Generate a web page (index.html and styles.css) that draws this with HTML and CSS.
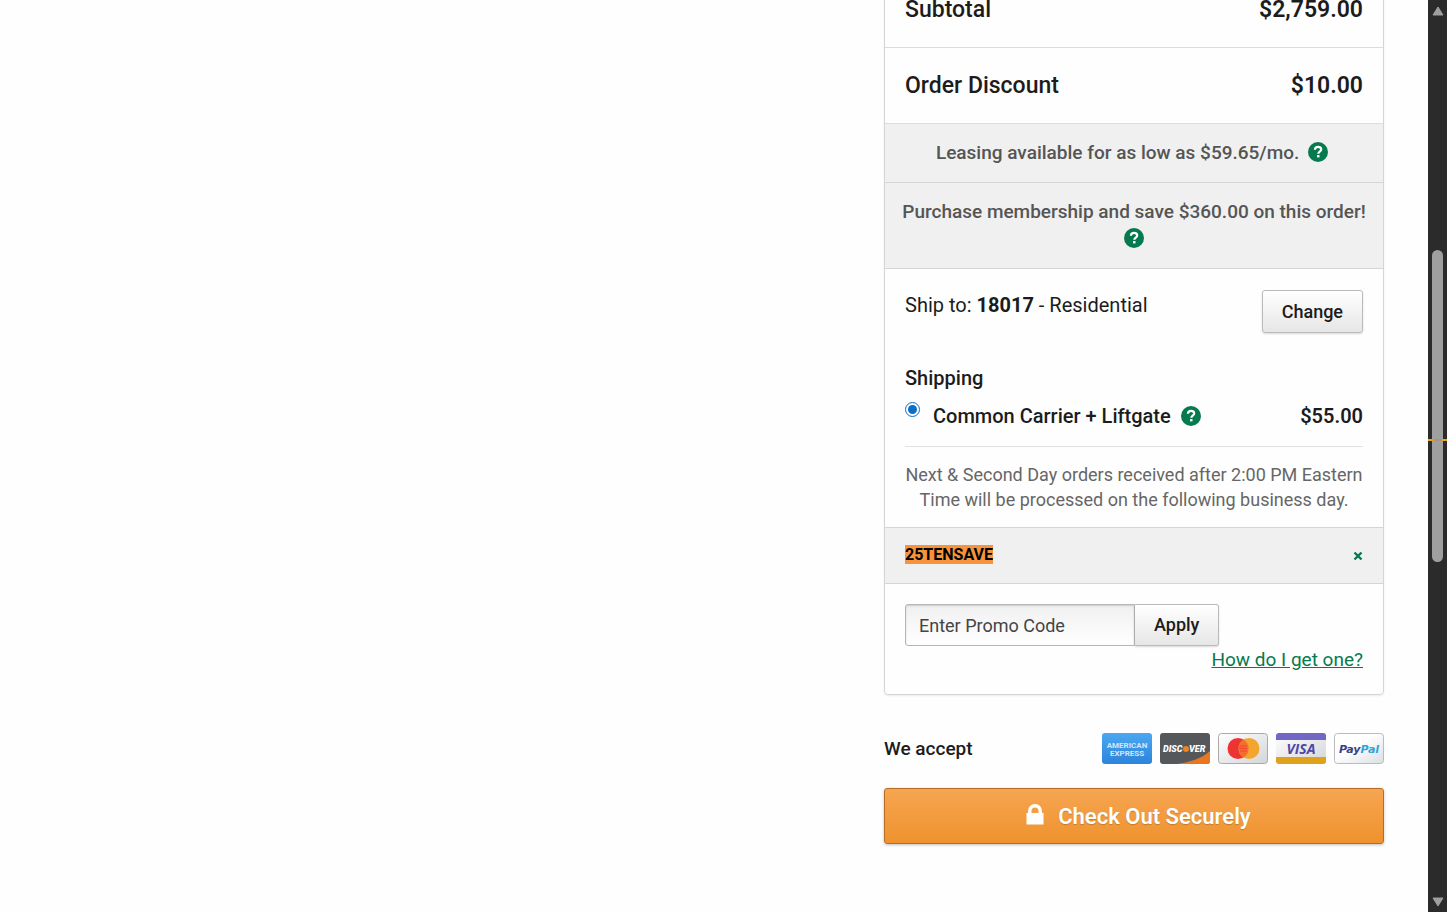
FILE: index.html
```html
<!DOCTYPE html>
<html lang="en">
<head>
  <meta charset="UTF-8" />
  <meta name="viewport" content="width=device-width, initial-scale=1.0"/>
  <title>Cart</title>
  <link rel="stylesheet" href="styles.css">
</head>
<body>

<svg class="sprite" aria-hidden="true">
  <symbol id="help" viewBox="0 0 20 20">
    <circle cx="10" cy="10" r="10" fill="#067a4f"/>
    <path d="M6.9 7.7C7 5.7 8.3 4.8 10.1 4.8c1.8 0 3.1 1 3.1 2.6 0 2.2-2.9 2.2-2.9 4.4" fill="none" stroke="#fff" stroke-width="2.2"/>
    <rect x="9" y="13" width="2.5" height="2.4" fill="#fff"/>
  </symbol>
</svg>

<div class="page">
  <main class="cart">
    <aside class="sidebar">
      <div class="summary">
        <div class="total-row">
          <span>Subtotal</span>
          <span class="amount">$2,759.00</span>
        </div>
        <div class="total-row">
          <span>Order Discount</span>
          <span class="amount">$10.00</span>
        </div>

        <div class="notice">
          Leasing available for as low as $59.65/mo.
          <button class="help" aria-label="Leasing details"><svg><use href="#help"/></svg></button>
        </div>
        <div class="notice">
          Purchase membership and save $360.00 on this order!
          <button class="help" aria-label="Membership details"><svg><use href="#help"/></svg></button>
        </div>

        <div class="shipping">
          <div class="ship-to">
            <p>Ship to: <strong>18017</strong> - Residential</p>
            <button class="btn">Change</button>
          </div>
          <h2>Shipping</h2>
          <div class="method">
            <input type="radio" id="carrier" name="method" checked>
            <label for="carrier">Common Carrier + Liftgate</label>
            <button class="help" aria-label="Carrier details"><svg><use href="#help"/></svg></button>
            <span class="amount">$55.00</span>
          </div>
          <p class="cutoff">Next &amp; Second Day orders received after 2:00 PM Eastern Time will be processed on the following business day.</p>
        </div>

        <div class="coupon">
          <mark>25TENSAVE</mark>
          <button class="remove" aria-label="Remove coupon">
            <svg viewBox="0 0 10 10"><path d="M1.5 1.5l7 7M8.5 1.5l-7 7" stroke="#067a4f" stroke-width="2.4"/></svg>
          </button>
        </div>

        <form class="promo">
          <div class="promo-field">
            <input type="text" placeholder="Enter Promo Code" aria-label="Enter Promo Code">
            <button type="button" class="btn">Apply</button>
          </div>
          <a href="#">How do I get one?</a>
        </form>
      </div>

      <div class="accept">
        <span>We accept</span>
        <div class="cards">
          <svg viewBox="0 0 50 31" role="img" aria-label="American Express">
            <defs>
              <linearGradient id="amex" x2="0" y2="1"><stop stop-color="#4ba7f0"/><stop offset="1" stop-color="#2c84dc"/></linearGradient>
              <linearGradient id="silver" x2="1" y2="1"><stop stop-color="#fff"/><stop offset="1" stop-color="#d3d5d8"/></linearGradient>
              <linearGradient id="pale" x2="1" y2="1"><stop offset=".4" stop-color="#fff"/><stop offset="1" stop-color="#dcdee2"/></linearGradient>
            </defs>
            <rect width="50" height="31" rx="3" fill="url(#amex)"/>
            <text class="amex" x="25" y="15" text-anchor="middle">AMERICAN</text>
            <text class="amex" x="25" y="23" text-anchor="middle">EXPRESS</text>
          </svg>
          <svg viewBox="0 0 50 31" role="img" aria-label="Discover">
            <rect width="50" height="31" rx="3" fill="#55585b"/>
            <path d="M50 18v10a3 3 0 0 1-3 3H17c13-2 24-5 33-13z" fill="#e8771f"/>
            <text class="discover" x="3" y="19">DISC</text>
            <circle cx="26" cy="16" r="3" fill="#f08322"/>
            <text class="discover" x="29" y="19">VER</text>
          </svg>
          <svg viewBox="0 0 50 31" role="img" aria-label="Mastercard">
            <rect x=".5" y=".5" width="49" height="30" rx="3" fill="url(#silver)" stroke="#aaa"/>
            <circle cx="20" cy="15.500" r="10.500" fill="#ee3433"/>
            <circle cx="31" cy="15.500" r="10.500" fill="#f4a52f"/>
            <path d="M25.500 6.500a10.500 10.500 0 0 1 0 18 10.500 10.500 0 0 1 0-18z" fill="#f2702b"/>
            <path d="M22 13h7M21 15.500h8M22 18h7" stroke="#ee4433"/>
          </svg>
          <svg viewBox="0 0 50 31" role="img" aria-label="Visa">
            <rect width="50" height="31" rx="3" fill="url(#silver)"/>
            <path d="M0 7V3a3 3 0 0 1 3-3h44a3 3 0 0 1 3 3v4z" fill="#7167c5"/>
            <path d="M0 24h50v4a3 3 0 0 1-3 3H3a3 3 0 0 1-3-3z" fill="#e0a11d"/>
            <text class="visa" x="25" y="21" text-anchor="middle">VISA</text>
          </svg>
          <svg viewBox="0 0 50 31" role="img" aria-label="PayPal">
            <rect x=".5" y=".5" width="49" height="30" rx="3" fill="url(#pale)" stroke="#bbb"/>
            <text class="paypal" x="25" y="20" text-anchor="middle">Pay<tspan fill="#2fa3dc">Pal</tspan></text>
          </svg>
        </div>
      </div>

      <button class="checkout">
        <svg viewBox="0 0 18 21"><path d="M2 9V7a7 7 0 0 1 14 0v2h1.500v11.500H.5V9zM5.500 9h7V7a3.500 3.500 0 0 0-7 0z" fill="#fff" fill-rule="evenodd"/></svg>
        Check Out Securely
      </button>
    </aside>
  </main>

  <div class="scrollbar">
    <svg viewBox="0 0 12 10"><path d="M6 1l5 8H1z" fill="#9f9f9f" stroke="#9f9f9f" stroke-linejoin="round"/></svg>
    <div class="track">
      <div class="thumb"></div>
      <div class="match"></div>
    </div>
    <svg viewBox="0 0 12 10"><path d="M6 9L1 1h10z" fill="#9f9f9f" stroke="#9f9f9f" stroke-linejoin="round"/></svg>
  </div>
</div>

</body>
</html>
```
FILE: styles.css
```css
* {
  box-sizing: border-box;
}

body {
  margin: 0;
  font-family: Roboto, sans-serif;
  font-size: 20px;
  line-height: 28px;
  color: #1c1c1c;
  background: #fefefe;
}

h2,
p {
  margin: 0;
}

button,
input {
  font-family: inherit;
}

.sprite {
  display: none;
}

.page {
  display: flex;
  height: 100vh;
}

.cart {
  flex: 1;
  overflow: hidden;
  padding-right: 44px;
}

.sidebar {
  width: 35%;
  min-width: 500px;
  margin-left: auto;
  margin-top: -29px;
}

/* order summary */
.summary {
  border: 1px solid #d5d5d5;
  border-radius: 4px;
  box-shadow: 0 1px 2px rgba(0, 0, 0, 0.08);
}

.total-row {
  display: flex;
  justify-content: space-between;
  padding: 24px 20px 23px;
  border-bottom: 1px solid #dcdcdc;
  font-size: 23px;
  font-weight: 500;
}

.amount {
  font-weight: 600;
}

.notice {
  padding: 15px 16px 16px;
  border-bottom: 1px solid #d5d5d5;
  background: #f0f0f0;
  color: #555;
  font-size: 19px;
  font-weight: 500;
  line-height: 27px;
  text-align: center;
}

.help {
  display: inline-block;
  width: 20px;
  height: 20px;
  margin-left: 4px;
  padding: 0;
  border: none;
  background: none;
  vertical-align: -3px;
  cursor: pointer;
}

.notice .help {
  margin: 0 4px;
}

.help svg {
  display: block;
  width: 20px;
  height: 20px;
}

/* shipping */
.shipping {
  padding: 21px 20px 15px;
}

.ship-to {
  display: flex;
  justify-content: space-between;
  align-items: flex-start;
  margin-bottom: 31px;
}

.ship-to p {
  line-height: 30px;
}

.btn {
  padding: 0 19px;
  border: 1px solid #bbb;
  border-radius: 3px;
  background: linear-gradient(#fff, #e6e6e6);
  box-shadow: 0 1px 2px rgba(0, 0, 0, 0.15);
  color: #1c1c1c;
  font-size: 18px;
  font-weight: 500;
  line-height: 41px;
  cursor: pointer;
}

.shipping h2 {
  font-size: 20px;
  font-weight: 500;
}

.method {
  display: flex;
  align-items: center;
  padding: 10px 0 16px;
  border-bottom: 1px solid #e2e2e2;
  font-weight: 500;
}

.method input {
  align-self: flex-start;
  width: 15px;
  height: 15px;
  margin: 0 13px 0 0;
  accent-color: #0a6fc9;
}

.method .help {
  margin-left: 10px;
}

.method .amount {
  margin-left: auto;
}

.cutoff {
  padding-top: 15px;
  color: #666;
  font-size: 18px;
  line-height: 25px;
  text-align: center;
}

/* promo code */
.coupon {
  display: flex;
  justify-content: space-between;
  align-items: center;
  height: 57px;
  padding: 0 20px;
  border: solid #d5d5d5;
  border-width: 1px 0;
  background: #f0f0f0;
}

.coupon mark {
  margin-bottom: 2px;
  background: #f7943b;
  color: #000;
  font-size: 16px;
  font-weight: 700;
  line-height: 19px;
}

.remove {
  width: 10px;
  padding: 0;
  border: none;
  background: none;
  cursor: pointer;
}

.remove svg {
  display: block;
}

.promo {
  padding: 20px 20px 21px;
}

.promo-field {
  display: flex;
  height: 42px;
}

.promo-field input {
  width: 230px;
  padding: 0 13px;
  border: 1px solid #b5b5b5;
  border-radius: 3px 0 0 3px;
  background: linear-gradient(#f0f0f0, #fff);
  box-shadow: inset 0 1px 2px rgba(0, 0, 0, 0.15);
  font-size: 18px;
}

.promo-field input::placeholder {
  color: #444;
}

.promo-field .btn {
  border-left: none;
  border-radius: 0 3px 3px 0;
  line-height: 40px;
}

.promo a {
  display: block;
  color: #067a4f;
  font-size: 19px;
  line-height: 27px;
  text-align: right;
}

/* payment */
.accept {
  display: flex;
  justify-content: space-between;
  align-items: center;
  margin: 38px 0 24px;
  font-size: 19px;
  font-weight: 500;
}

.cards {
  display: flex;
  gap: 8px;
}

.cards svg {
  display: block;
  width: 50px;
  height: 31px;
}

.cards text {
  font-weight: 700;
}

.amex {
  font-size: 8px;
  fill: #cfe6fb;
}

.cards .discover {
  font-size: 9px;
  font-style: italic;
  font-weight: 900;
  fill: #fff;
}

.visa {
  font-family: "Open Sans", sans-serif;
  font-size: 14px;
  font-style: italic;
  fill: #5146a5;
}

.paypal {
  font-family: "DejaVu Sans", sans-serif;
  font-size: 11px;
  font-style: italic;
  fill: #3a3f86;
}

.checkout {
  display: flex;
  justify-content: center;
  align-items: center;
  gap: 14px;
  width: 100%;
  height: 56px;
  padding: 0 0 0 9px;
  border: 1px solid #b56d25;
  border-radius: 3px;
  background: linear-gradient(#f7a552, #ee922d);
  box-shadow: 0 1px 3px rgba(0, 0, 0, 0.25);
  color: #fff;
  font-size: 22px;
  font-weight: 600;
  text-shadow: 0 1px 1px rgba(0, 0, 0, 0.2);
  cursor: pointer;
}

.checkout svg {
  width: 18px;
  height: 21px;
  margin-bottom: 4px;
}

/* scrollbar */
.scrollbar {
  display: flex;
  flex-direction: column;
  align-items: center;
  gap: 1px;
  width: 19px;
  padding: 6px 0 5px;
  background: #2b2b2b;
}

.scrollbar svg {
  width: 12px;
  height: 10px;
}

.track {
  position: relative;
  flex: 1;
  width: 100%;
}

.thumb {
  position: absolute;
  top: 26.500%;
  left: 4px;
  right: 4px;
  height: 35.500%;
  border-radius: 6px;
  background: #9f9f9f;
}

.match {
  position: absolute;
  top: 48%;
  width: 100%;
  height: 2px;
  background: linear-gradient(90deg, #e9a51c 5px, #a99584 5px, #a99584 14px, #e9a51c 14px);
}
```
